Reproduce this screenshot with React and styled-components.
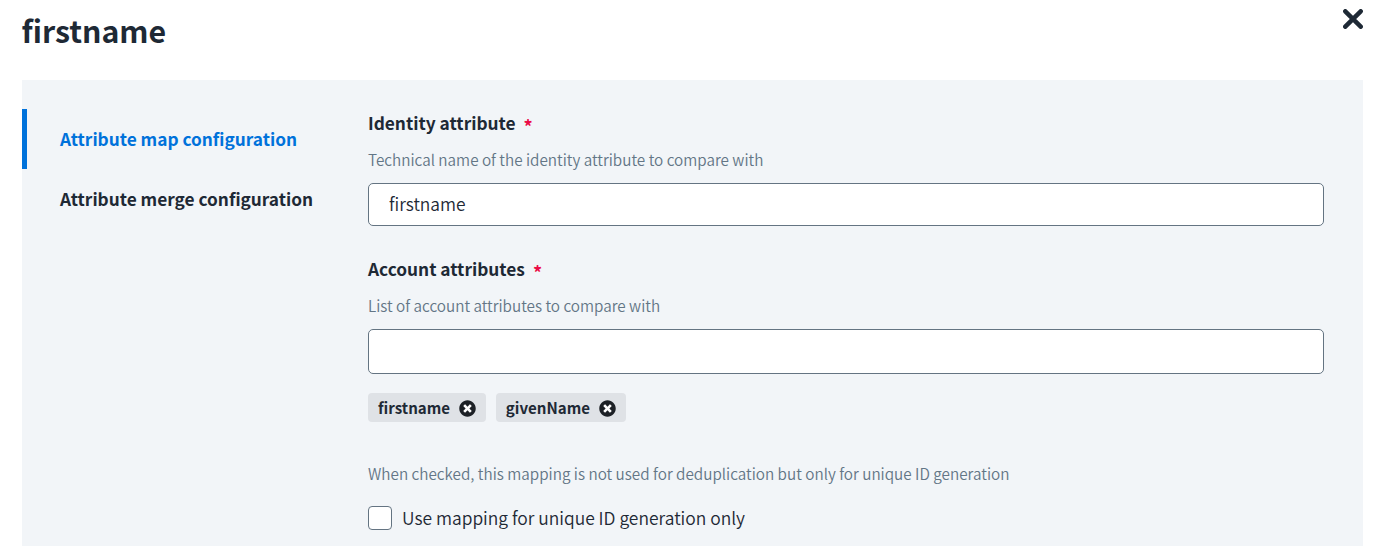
import React from 'react';
import styled, { createGlobalStyle } from 'styled-components';
import { FaTimesCircle } from 'react-icons/fa';

const GlobalStyle = createGlobalStyle`
  * { box-sizing: border-box; }
  body { margin: 0; background: #fff; color: #1e2935; font-family: "Noto Sans CJK JP", "Noto Sans", sans-serif; font-weight: 350; overflow: hidden; }
`;
const Dialog = styled.main`height: 546px; padding: 0 21.5px; display: flex; flex-direction: column; overflow: hidden;`;
const Header = styled.header`height: 80px; flex: none; display: flex; justify-content: space-between; align-items: flex-start;`;
const Title = styled.h1`margin: 6px 0 0; font-size: 30.3px; line-height: 48px; font-weight: 700;`;
const CloseButton = styled.button`margin: 9px 0 0; padding: 0; border: 0; background: none; width: 20px; height: 20px; color: #1e2935; svg { display: block; }`;
const Panel = styled.section`flex: 1; display: flex; background: #f2f5f8; padding: 29px 38.5px 0 0;`;
const Tabs = styled.nav`width: 346.5px; flex: none; display: flex; flex-direction: column;`;
const Tab = styled.a`
  height: 60px; display: flex; align-items: center; padding: 0 0 2px 33.5px; white-space: nowrap;
  border-left: 5px solid ${p => (p.$active ? '#0072db' : 'transparent')};
  color: ${p => (p.$active ? '#0072db' : '#1e2935')};
  font-size: 17.25px; font-weight: 700;
`;
const Form = styled.form`flex: 1; min-width: 0; display: flex; flex-direction: column; margin-top: -1px;`;
const Field = styled.div`display: flex; flex-direction: column; margin-bottom: ${p => p.$gap}px;`;
const Label = styled.label`display: flex; gap: 8px; font-size: 17.3px; line-height: 30px; font-weight: 700;`;
const Required = styled.span`color: #eb0b46; font-size: 18px; line-height: 36px; height: 30px;`;
const Hint = styled.p`margin: 0; font-size: 15.27px; line-height: 24px; color: #637686; white-space: nowrap;`;
const FieldHint = styled(Hint)`margin: 9px 0 12px;`;
const Input = styled.input`
  width: 100%; height: ${p => p.$height}px; border: 1px solid #647482; border-radius: 5px; background: #fff;
  padding: 0 20px 2px; font: 350 17.4px "Noto Sans CJK JP", "Noto Sans", sans-serif; color: #1e2935; outline: 0;
`;
const Chips = styled.div`display: flex; gap: 10px; margin-top: 19px;`;
const Chip = styled.span`
  display: flex; align-items: center; gap: 9.3px; height: 29px; padding: 0 9.5px 2px 10px; border-radius: 4px;
  background: #dfe2e6; font-size: 15.1px; font-weight: 700;
`;
const RemoveIcon = styled(FaTimesCircle)`
  display: block; width: 17px; height: 17px; flex: none; margin: 3px 0 0; color: #1d2126;
  background: radial-gradient(circle, #fff 45%, transparent 46%);
`;
const CheckRow = styled.label`display: flex; align-items: center; gap: 10px; margin-top: 19px; font-size: 17.43px; line-height: 28px;`;
const Checkbox = styled.input`appearance: none; margin: 0; width: 24px; height: 24px; border: 1px solid #647482; border-radius: 4px; background: #fff;`;

export default function App() {
  return (
    <>
      <GlobalStyle />
      <Dialog>
        <Header>
          <Title>firstname</Title>
          <CloseButton aria-label="Close">
            <svg width="20" height="20" viewBox="0 0 20 20"><path d="M2.3 2.3l15.4 15.4M17.7 2.3L2.3 17.7" stroke="currentColor" strokeWidth="4.5" strokeLinecap="round" /></svg>
          </CloseButton>
        </Header>
        <Panel>
          <Tabs>
            <Tab $active>Attribute map configuration</Tab>
            <Tab>Attribute merge configuration</Tab>
          </Tabs>
          <Form>
            <Field $gap={28}>
              <Label>Identity attribute <Required>*</Required></Label>
              <FieldHint>Technical name of the identity attribute to compare with</FieldHint>
              <Input $height={43} defaultValue="firstname" />
            </Field>
            <Field $gap={39}>
              <Label>Account attributes <Required>*</Required></Label>
              <FieldHint>List of account attributes to compare with</FieldHint>
              <Input $height={45} />
              <Chips>
                <Chip>firstname <RemoveIcon /></Chip>
                <Chip>givenName <RemoveIcon /></Chip>
              </Chips>
            </Field>
            <Hint>When checked, this mapping is not used for deduplication but only for unique ID generation</Hint>
            <CheckRow><Checkbox type="checkbox" />Use mapping for unique ID generation only</CheckRow>
          </Form>
        </Panel>
      </Dialog>
    </>
  );
}
